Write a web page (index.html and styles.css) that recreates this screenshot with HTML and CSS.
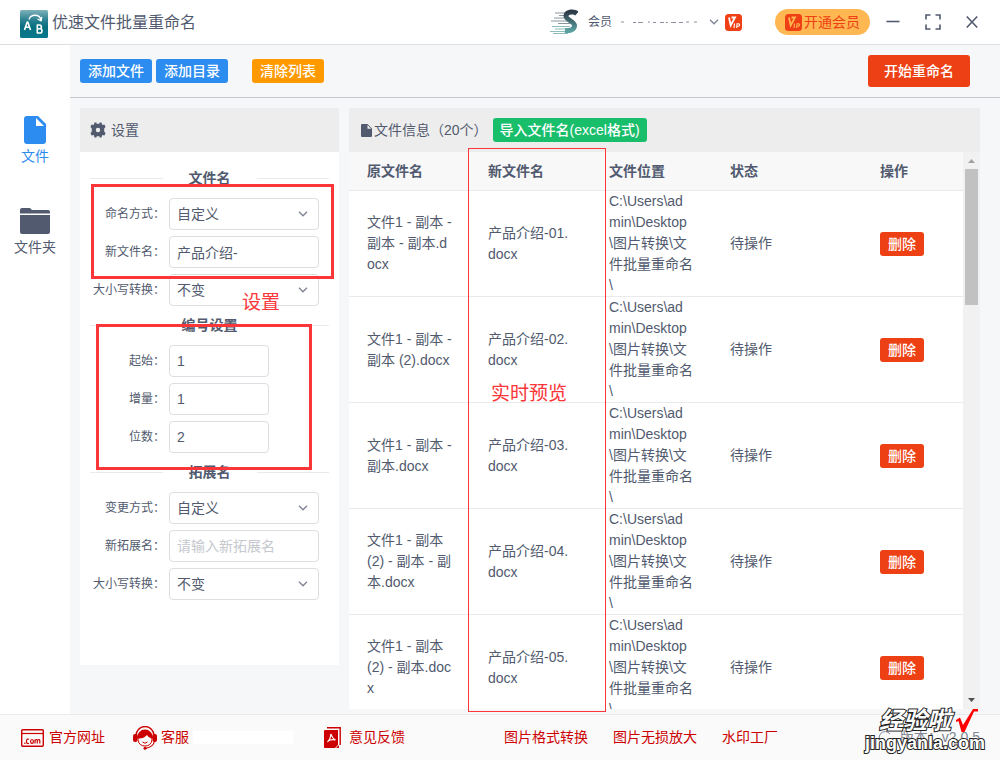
FILE: index.html
```html
<!DOCTYPE html>
<html lang="zh-CN">
<head>
<meta charset="utf-8">
<title>优速文件批量重命名</title>
<link rel="stylesheet" href="styles.css">
</head>
<body>
<div class="app">
  <header class="titlebar">
    <svg class="logo" width="28" height="28" viewBox="0 0 28 28" aria-hidden="true">
      <defs><linearGradient id="lg" x1="0" y1="0" x2="0" y2="1"><stop offset="0" stop-color="#7fb2bb"/><stop offset=".35" stop-color="#2c8191"/><stop offset=".6" stop-color="#08707f"/><stop offset="1" stop-color="#08798d"/></linearGradient></defs>
      <rect width="28" height="28" rx="1.5" fill="url(#lg)"/>
      <g fill="none" stroke="#fff" stroke-width="1.6" stroke-linejoin="round">
        <path d="M4.5 20 7.2 12h.6l2.700 8M5.600 17.300h3.800" />
        <path d="M17.300 15v8h2.600a2.100 2.100 0 0 0 0-4.200h-2.600 2.200a1.900 1.900 0 0 0 0-3.800z"/>
        <path d="M9 9.500c1.500-5.500 10.500-6 12 .5" stroke-width="1.300"/>
        <path d="m17.500 9 3.700 1.800.5-4" stroke-width="1.300"/>
      </g>
    </svg>
    <h1 class="app-name">优速文件批量重命名</h1>
    <div class="account">
      <svg width="28" height="26" viewBox="0 0 28 26" aria-hidden="true">
        <defs><linearGradient id="sg" x1="0" y1="0" x2="0" y2="1"><stop offset="0" stop-color="#2d3b49"/><stop offset="1" stop-color="#5aa0a0"/></linearGradient></defs>
        <path d="M5 4h11M9 6.500h6M4 9h11M1 12h16M8 14.500h12" stroke="#8b969e" stroke-width="1"/>
        <path d="M2 17.500h18M5 20h14M0 22.500h20M3 24.500h15" stroke="#8ebcbc" stroke-width="1.200"/>
        <path d="M27 4.500c-3-2.500-10-2-11 2-.7 4.500 9 6 8.500 10.500-.5 4-5 5-9.500 4.500" fill="none" stroke="url(#sg)" stroke-width="5"/>
      </svg>
      <span class="account-name">会员</span>
      <svg class="masked" width="80" height="3" viewBox="0 0 80 3" aria-hidden="true"><path d="M1 1h3M13 1.500h3M18 1.500h5M28 1h2M33 1.500h3M40 1.500h4M46 1.500h2M51 1.500h5M59 1.500h4M66 1h3M74 1h3" stroke="#8b92a0"/></svg>
      <svg class="chev" width="10" height="6" viewBox="0 0 10 6" aria-hidden="true"><path d="m1 .8 4 4 4-4"/></svg>
      <svg width="17" height="17" viewBox="0 0 17 17" aria-hidden="true"><rect width="17" height="17" rx="3.500" fill="#ee4014"/><path d="m4 3.500 1.700 8L10 3.500H6.500" fill="none" stroke="#fff" stroke-width="1.800"/><path d="M9.500 9.500 9 14M11.600 14l.5-4.300h1.400c1.700 0 1.300 2.500-.3 2.500h-1.300" fill="none" stroke="#fff" stroke-width="1.100"/></svg>
    </div>
    <button class="vip" type="button">
      <svg width="17" height="17" viewBox="0 0 17 17" aria-hidden="true"><rect width="17" height="17" rx="3.500" fill="#ee4014"/><path d="m4 3.500 1.700 8L10 3.500H6.500" fill="none" stroke="#ffb751" stroke-width="1.800"/><path d="M9.500 9.500 9 14M11.600 14l.5-4.300h1.400c1.700 0 1.300 2.500-.3 2.500h-1.300" fill="none" stroke="#ffb751" stroke-width="1.100"/></svg>
      开通会员
    </button>
    <div class="window-controls">
      <button type="button" aria-label="最小化"><svg width="14" height="16" viewBox="0 0 14 16"><path d="M.5 7.500h13"/></svg></button>
      <button type="button" aria-label="最大化"><svg width="16" height="16" viewBox="0 0 16 16"><path d="M1 5.500V1h4.500M10.500 1H15v4.500M15 10.500V15h-4.500M5.500 15H1v-4.500" stroke-width="2"/></svg></button>
      <button type="button" aria-label="关闭"><svg width="12" height="16" viewBox="0 0 12 16"><path d="m.8 2.500 10.400 11M11.200 2.500.8 13.500"/></svg></button>
    </div>
  </header>

  <div class="body">
    <nav class="side">
      <a class="side-item active" href="#file">
        <svg width="22" height="28" viewBox="0 0 22 28" aria-hidden="true"><path fill="currentColor" fill-rule="evenodd" d="M3 0h11l8 8v17a3 3 0 0 1-3 3H3a3 3 0 0 1-3-3V3a3 3 0 0 1 3-3zm9 2v8h8z"/></svg>
        文件
      </a>
      <a class="side-item" href="#folder">
        <svg width="30" height="28" viewBox="0 0 30 28" aria-hidden="true"><path fill="currentColor" d="M0 6.500V3q0-2 2-2h8l2 2h16q2 0 2 2v1.500zM0 8h30v17q0 2-2 2H2q-2 0-2-2z"/></svg>
        文件夹
      </a>
    </nav>

    <main class="main">
      <div class="toolbar">
        <button class="btn blue" type="button">添加文件</button>
        <button class="btn blue" type="button">添加目录</button>
        <button class="btn orange" type="button">清除列表</button>
        <button class="btn red start" type="button">开始重命名</button>
      </div>

      <div class="content">
        <section class="panel settings">
          <h2 class="panel-head">
            <svg width="16" height="16" viewBox="0 0 16 16" aria-hidden="true"><path fill="currentColor" fill-rule="evenodd" d="M4.500.5h2v1.200h3V.5h2l.8 2.500 2.200-.5 1 2.500-1.300 1.500v3L15.500 11l-1 2.500-2.200-.5-.8 2.500h-2v-1.200h-3v1.200h-2L3.700 13l-2.200.5-1-2.500 1.300-1.500v-3L.5 5l1-2.500 2.200.5zM8 5.800a2.200 2.200 0 1 0 0 4.400 2.200 2.200 0 0 0 0-4.400z"/></svg>
            设置
          </h2>
          <form class="form">
            <h3 class="divider">文件名</h3>
            <div class="row"><label for="mode">命名方式：</label><span class="select"><select id="mode"><option>自定义</option></select><svg class="chev" width="10" height="6" viewBox="0 0 10 6"><path d="m1 .8 4 4 4-4"/></svg></span></div>
            <div class="row"><label for="name">新文件名：</label><input id="name" type="text" value="产品介绍-"></div>
            <div class="row"><label for="case1">大小写转换：</label><span class="select"><select id="case1"><option>不变</option></select><svg class="chev" width="10" height="6" viewBox="0 0 10 6"><path d="m1 .8 4 4 4-4"/></svg></span></div>
            <h3 class="divider">编号设置</h3>
            <div class="row"><label for="from">起始：</label><input class="short" id="from" type="text" value="1"></div>
            <div class="row"><label for="step">增量：</label><input class="short" id="step" type="text" value="1"></div>
            <div class="row"><label for="digits">位数：</label><input class="short" id="digits" type="text" value="2"></div>
            <h3 class="divider">拓展名</h3>
            <div class="row"><label for="extmode">变更方式：</label><span class="select"><select id="extmode"><option>自定义</option></select><svg class="chev" width="10" height="6" viewBox="0 0 10 6"><path d="m1 .8 4 4 4-4"/></svg></span></div>
            <div class="row"><label for="ext">新拓展名：</label><input id="ext" type="text" placeholder="请输入新拓展名"></div>
            <div class="row"><label for="case2">大小写转换：</label><span class="select"><select id="case2"><option>不变</option></select><svg class="chev" width="10" height="6" viewBox="0 0 10 6"><path d="m1 .8 4 4 4-4"/></svg></span></div>
          </form>
          <div class="mark mark-name"></div>
          <div class="mark mark-number"></div>
          <span class="note note-settings">设置</span>
        </section>

        <section class="panel files">
          <h2 class="panel-head files-head">
            <svg width="11" height="13" viewBox="0 0 11 13" aria-hidden="true"><path fill="currentColor" fill-rule="evenodd" d="M1 0h5.500L11 4.500V12q0 1-1 1H1q-1 0-1-1V1q0-1 1-1zm5.500 1v3.700h3.700z"/></svg>
            文件信息（20个）
            <button class="btn green" type="button">导入文件名(excel格式)</button>
          </h2>
          <div class="table-area">
            <div class="table-clip">
              <table>
                <colgroup><col class="c1"><col class="c2"><col class="c3"><col class="c4"><col class="c5"></colgroup>
                <thead><tr><th>原文件名</th><th>新文件名</th><th>文件位置</th><th>状态</th><th>操作</th></tr></thead>
                <tbody>
                  <tr><td>文件1 - 副本 - 副本 - 副本.docx</td><td>产品介绍-01.docx</td><td>C:\Users\ad<br>min\Desktop<br>\图片转换\文<br>件批量重命名<br>\</td><td>待操作</td><td><button class="btn red" type="button">删除</button></td></tr>
                  <tr><td>文件1 - 副本 - 副本 (2).docx</td><td>产品介绍-02.docx</td><td>C:\Users\ad<br>min\Desktop<br>\图片转换\文<br>件批量重命名<br>\</td><td>待操作</td><td><button class="btn red" type="button">删除</button></td></tr>
                  <tr><td>文件1 - 副本 - 副本.docx</td><td>产品介绍-03.docx</td><td>C:\Users\ad<br>min\Desktop<br>\图片转换\文<br>件批量重命名<br>\</td><td>待操作</td><td><button class="btn red" type="button">删除</button></td></tr>
                  <tr><td>文件1 - 副本 (2) - 副本 - 副本.docx</td><td>产品介绍-04.docx</td><td>C:\Users\ad<br>min\Desktop<br>\图片转换\文<br>件批量重命名<br>\</td><td>待操作</td><td><button class="btn red" type="button">删除</button></td></tr>
                  <tr><td>文件1 - 副本 (2) - 副本.docx</td><td>产品介绍-05.docx</td><td>C:\Users\ad<br>min\Desktop<br>\图片转换\文<br>件批量重命名<br>\</td><td>待操作</td><td><button class="btn red" type="button">删除</button></td></tr>
                </tbody>
              </table>
            </div>
            <div class="scrollbar" aria-hidden="true">
              <svg width="17" height="17" viewBox="0 0 17 17"><path d="M5 11h7L8.500 7z" fill="#a3a3a3"/></svg>
              <div class="track"><div class="thumb"></div></div>
              <svg width="17" height="17" viewBox="0 0 17 17"><path d="M5 6h7l-3.500 4z" fill="#505050"/></svg>
            </div>
          </div>
          <div class="mark mark-preview"></div>
          <span class="note note-preview">实时预览</span>
        </section>
      </div>
    </main>
  </div>

  <footer class="footer">
    <a href="#site">
      <svg width="23" height="18" viewBox="0 0 23 18" aria-hidden="true"><g fill="none" stroke="#c00"><rect x=".7" y=".7" width="21.600" height="16.600" rx="1" stroke-width="1.400"/><path d="M1 4.500h21" stroke-width="1.200"/><path d="M8 10.300q-2.500-1-2.500 2t2.500 2M14 14.500v-4M14 11.500q2-2 2.300 0v3M16.300 11.500q2-2 2.500 0v3" stroke-width="1.200"/><ellipse cx="11" cy="12.400" rx="1.400" ry="1.900" stroke-width="1.200"/><path d="M3.300 14.200h1.200" stroke-width="1.400"/></g></svg>
      官方网址
    </a>
    <a class="service" href="#service">
      <svg width="24" height="24" viewBox="0 0 24 24" aria-hidden="true"><path d="M3 9.500a9 9 0 0 1 18 0" fill="none" stroke="#c00" stroke-width="1.400"/><path d="M4 12a8 8.500 0 0 1 16 0l-1 2H5z" fill="#c00"/><path d="M5.500 12.500q5 .3 8.500-3.500 1.500 3 4.500 3.500c0 9-13 9-13 0z" fill="#fafafa"/><path d="M5 14q1 6 7 6t7-6" fill="none" stroke="#c00"/><path d="M9.500 16q2.500 2.500 5 0" fill="none" stroke="#c00"/><rect y="8" width="4.500" height="8" rx="2" fill="#c00"/><rect x="19.500" y="8" width="4.500" height="8" rx="2" fill="#c00"/><path d="M21.500 15q-1 6-9 7.300" fill="none" stroke="#c00" stroke-width="1.200"/><circle cx="12" cy="22.300" r="1.500" fill="#c00"/></svg>
      <span>客服</span><span class="blank"></span>
    </a>
    <a class="feedback" href="#feedback">
      <svg width="18" height="22" viewBox="0 0 18 22" aria-hidden="true"><path d="M3 .8h13.200V18" fill="none" stroke="#c00" stroke-width="1.400"/><path d="M1 3h13v15l-3 3H1q-1 0-1-1V4q0-1 1-1z" fill="#c00"/><path d="M15 18v3h-3z" fill="#c00"/><path d="M7 7c-1 2 1 3.500-3.500 8M7 7c1 3 1 4 4.500 6-3-1-5-.5-7.500 1" fill="none" stroke="#fff" stroke-width="1.200"/></svg>
      意见反馈
    </a>
    <a class="convert" href="#convert">图片格式转换</a>
    <a class="enlarge" href="#enlarge">图片无损放大</a>
    <a class="enlarge" href="#watermark">水印工厂</a>
    <span class="version"><svg width="14" height="14" viewBox="0 0 14 14" aria-hidden="true"><path d="M12 3a6 6 0 1 0 1 5H9" fill="none" stroke="#808695"/></svg>版本：v2.0.5</span>
    <div class="stamp">
      <span class="stamp-name">经验啦</span>
      <svg class="stamp-check" width="24" height="24" viewBox="0 0 24 24" aria-hidden="true"><path d="m1 11 4-2.500 3 7.500L18 0h5v2.500h-4L9.500 23h-3L3.500 12 1 13z" fill="#f00"/></svg>
      <span class="stamp-site">jingyanla.com</span>
    </div>
  </footer>
</div>
</body>
</html>
```
FILE: styles.css
```css
* { box-sizing: border-box; }
body {
  margin: 0;
  color: #515a6e;
  font: 14px/21px "Liberation Sans", "Noto Sans CJK SC", sans-serif;
}
h1, h2, h3 { margin: 0; font-weight: 400; }
button, input, select { font: inherit; color: inherit; }
button { cursor: pointer; }
svg { flex: none; display: block; }
a { text-decoration: none; }

.app { display: flex; flex-direction: column; height: 100vh; overflow: hidden; }

.titlebar {
  display: flex;
  align-items: center;
  height: 45px;
  flex: none;
  padding: 0 22px 0 20px;
  background: #fff;
  border-bottom: 1px solid #dcdee2;
}
.logo { margin-top: 3px; }
.app-name { margin-left: 4px; font-size: 16px; }
.account { display: flex; align-items: center; margin-left: auto; font-size: 12px; }
.account-name { margin: 0 8px 0 10px; }
.masked { margin-right: 9px; }
.account .chev { margin-right: 6px; }
.chev path { fill: none; stroke: #808695; stroke-width: 1.4; }
.vip {
  display: flex;
  align-items: center;
  gap: 2px;
  height: 26px;
  margin-left: 33px;
  padding: 0 10px;
  border: 0;
  border-radius: 13px;
  background: #ffb751;
  color: #ed4014;
}
.window-controls { display: flex; gap: 25px; margin-left: 16px; }
.window-controls button { padding: 0; border: 0; background: none; }
.window-controls path { fill: none; stroke: #515a6e; stroke-width: 1.6; }

.body { display: flex; flex: 1; min-height: 0; }
.side {
  display: flex;
  flex-direction: column;
  gap: 40px;
  width: 70px;
  flex: none;
  padding-top: 71px;
  background: #fff;
}
.side-item { display: flex; flex-direction: column; align-items: center; gap: 2px; color: #515a6e; }
.side-item.active { color: #2d8cf0; }

.main { display: flex; flex-direction: column; flex: 1; min-width: 0; background: #f5f7f9; }
.toolbar {
  display: flex;
  align-items: center;
  gap: 4px;
  height: 53px;
  flex: none;
  padding: 0 30px 0 10px;
  border-bottom: 1px solid #c5c8ce;
}
.btn {
  height: 24px;
  padding: 0 8px;
  border: 0;
  border-radius: 3px;
  color: #fff;
  font-weight: 500;
  line-height: 24px;
  white-space: nowrap;
}
.blue { background: #2d8cf0; }
.orange { margin-left: 20px; background: #f90; }
.red { background: #ed4014; }
.green { background: #19be6b; }
.start { height: 32px; margin-left: auto; padding: 0 16px; }

.content {
  display: flex;
  align-items: flex-start;
  gap: 10px;
  flex: 1;
  min-height: 0;
  padding: 10px 20px 5px 10px;
}
.panel { position: relative; background: #fff; }
.panel-head {
  display: flex;
  align-items: center;
  gap: 5px;
  height: 44px;
  flex: none;
  padding: 0 10px;
  background: #ededed;
  font-size: 14px;
}
.settings { width: 259px; flex: none; }
.form { display: grid; gap: 6px; padding: 7px 10px 65px; }
.divider {
  display: flex;
  align-items: center;
  gap: 26px;
  height: 39px;
  margin-bottom: -6px;
  font-size: 14px;
  font-weight: 700;
}
.row + .divider { margin-top: -6px; }
.divider::before, .divider::after { content: ""; flex: 1; border-top: 1px solid #e8eaec; }
.row { display: flex; align-items: center; gap: 4px; }
.row label { width: 75px; font-size: 12px; text-align: right; white-space: nowrap; }
.row input, .select select {
  width: 150px;
  height: 32px;
  padding: 0 7px;
  border: 1px solid #dcdee2;
  border-radius: 4px;
  background: #fff;
}
.row .short { width: 100px; }
.row input::placeholder { color: #c5c8ce; opacity: 1; }
.select { display: grid; align-items: center; }
.select select { grid-area: 1 / 1; appearance: none; }
.select .chev { grid-area: 1 / 1; justify-self: end; margin-right: 11px; pointer-events: none; }

.files { display: flex; flex-direction: column; flex: 1; min-width: 0; height: 100%; }
.files-head { gap: 2px; padding-left: 12px; }
.files-head .btn { margin-left: 3px; padding: 0 7px; }
.table-area { display: flex; flex: 1; min-height: 0; }
.table-clip { flex: 1; min-width: 0; overflow: hidden; }
table { width: 100%; border-spacing: 0; table-layout: fixed; }
.c1, .c2, .c3 { width: 121px; }
.c4 { width: 150px; }
th, td { padding: 0 17px 0 18px; border-bottom: 1px solid #e8eaec; text-align: left; word-break: break-all; }
th { height: 39px; background: #f8f8f9; font-weight: 700; }
td { height: 106px; }

.scrollbar { display: flex; flex-direction: column; width: 17px; flex: none; background: #f1f1f1; }
.track { flex: 1; padding: 0 2px; }
.thumb { height: 26%; background: #c1c1c1; }

/* Annotations drawn over the panels */
.mark { position: absolute; border: 3px solid #fb3538; pointer-events: none; }
.mark-name { left: 11px; top: 76px; width: 243px; height: 95px; }
.mark-number { left: 16px; top: 216px; width: 216px; height: 146px; }
.mark-preview { left: 119px; top: 40px; width: 138px; bottom: -3px; border-width: 1px; }
.note { position: absolute; color: #fb3538; font-size: 19px; line-height: 24px; }
.note-settings { left: 162px; top: 183px; }
.note-preview { left: 142px; top: 274px; }

.footer {
  position: relative;
  display: flex;
  align-items: center;
  height: 46px;
  flex: none;
  padding: 0 20px 0 21px;
  background: #fafafa;
  border-top: 1px solid #e8eaec;
  white-space: nowrap;
}
.footer a { display: flex; align-items: center; gap: 5px; color: #c00; }
.footer .service { gap: 4px; margin-left: 28px; }
.blank { width: 100px; height: 13px; background: #fff; }
.footer .feedback { gap: 7px; margin-left: 31px; }
.footer .convert { margin-left: 99px; }
.footer .enlarge { margin-left: 25px; }
.version { display: flex; align-items: center; gap: 8px; margin-left: auto; color: #808695; }
.stamp {
  position: absolute;
  right: 15px;
  bottom: 7px;
  display: grid;
  grid-template-columns: 1fr auto;
  color: #fff;
  font-weight: 700;
  paint-order: stroke fill;
  -webkit-text-stroke: 2px #222;
}
.stamp-name { justify-self: end; font-size: 24px; line-height: 24px; font-style: italic; }
.stamp-check { margin: 0 6px 0 4px; }
.stamp-site { grid-column: 1 / 3; font-size: 18px; line-height: 20px; }
```
